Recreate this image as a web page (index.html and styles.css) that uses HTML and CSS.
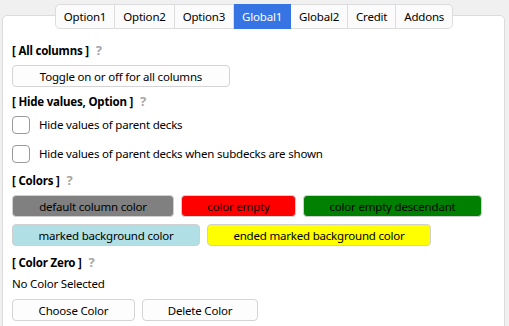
FILE: index.html
```html
<!DOCTYPE html>
<html lang="en">
<head>
    <meta charset="UTF-8">
    <title>Global1</title>
    <link rel="stylesheet" href="styles.css">
</head>
<body>
    <div class="window">
        <div class="tabbar">
            <button class="tab">Option1</button>
            <button class="tab">Option2</button>
            <button class="tab">Option3</button>
            <button class="tab active">Global1</button>
            <button class="tab">Global2</button>
            <button class="tab">Credit</button>
            <button class="tab">Addons</button>
        </div>
        <div class="panel">
            <div class="heading">[ All columns ] <span class="help">?</span></div>
            <button class="btn btn-toggle">Toggle on or off for all columns</button>

            <div class="heading">[ Hide values, Option ] <span class="help">?</span></div>
            <label class="check"><span class="box"></span>Hide values of parent decks</label>
            <label class="check second"><span class="box"></span>Hide values of parent decks when subdecks are shown</label>

            <div class="heading">[ Colors ] <span class="help">?</span></div>
            <div class="color-row">
                <button class="btn swatch gray">default column color</button>
                <button class="btn swatch red">color empty</button>
                <button class="btn swatch green">color empty descendant</button>
            </div>
            <div class="color-row">
                <button class="btn swatch lightblue">marked background color</button>
                <button class="btn swatch yellow">ended marked background color</button>
            </div>

            <div class="heading">[ Color Zero ] <span class="help">?</span></div>
            <div class="status">No Color Selected</div>
            <div class="btn-row">
                <button class="btn btn-choose">Choose Color</button>
                <button class="btn btn-delete">Delete Color</button>
            </div>
        </div>
    </div>
</body>
</html>
```
FILE: styles.css
```css
/* General */
body {
    margin: 0;
    background-color: #f0f0f0;
    font-family: "Noto Sans", "Open Sans", sans-serif;
    font-size: 11.5px;
    letter-spacing: -0.2px;
    color: #000;
}

.window {
    padding: 4px 4px 0 2px;
    height: 322px;
    overflow: hidden;
}

/* Tabs */
.tabbar {
    display: flex;
    justify-content: center;
    position: relative;
    z-index: 1;
    margin-bottom: -14px;
    padding-left: 1px;
}

.tab {
    font: inherit;
    letter-spacing: inherit;
    height: 25px;
    padding: 0 8px;
    background-color: #fbfbfb;
    border: 1px solid #dcdcdc;
    border-left: none;
    color: #000;
}

.tab:first-child {
    border-left: 1px solid #dcdcdc;
    border-radius: 5px 0 0 5px;
}

.tab:last-child {
    border-radius: 0 5px 5px 0;
}

.tab.active {
    background-color: #3574e2;
    border-color: #3574e2;
    color: #fff;
}

/* Panel */
.panel {
    background-color: #fff;
    border: 1px solid #dcdcdc;
    border-radius: 5px;
    padding: 26px 9px 20px 9px;
    height: 320px;
}

.heading {
    font-weight: bold;
    height: 16px;
    line-height: 16px;
    margin-top: 6px;
}

.heading:first-child {
    margin-top: 0;
}

.help {
    color: #a6a6a6;
    font-size: 13px;
    margin-left: 4px;
}

/* Buttons */
.btn {
    font: inherit;
    letter-spacing: inherit;
    display: block;
    height: 22px;
    padding: 0;
    background-color: #fdfdfd;
    border: 1px solid #d4d4d4;
    border-radius: 4px;
    color: #000;
}

.btn-toggle {
    width: 218px;
    margin-top: 7px;
}

/* Checkboxes */
.check {
    display: flex;
    align-items: center;
    height: 18px;
    margin-top: 7px;
    line-height: 18px;
}

.check.second {
    margin-top: 11px;
}

.check.second + .heading {
    margin-top: 9px;
}

.box {
    width: 16px;
    height: 16px;
    border: 1px solid #9a9a9a;
    border-radius: 4px;
    margin-right: 9px;
    background-color: #fff;
}

/* Color swatches */
.color-row {
    display: flex;
    gap: 7px;
    height: 22px;
    margin-top: 7px;
}

.color-row + .color-row {
    margin-top: 7px;
}

.color-row + .heading {
    margin-top: 8px;
}

.swatch { border-color: #d0d0d0; }
.gray { width: 162px; background-color: #808080; }
.red { width: 115px; background-color: #ff0000; }
.green { width: 179px; background-color: #008000; }
.lightblue { width: 188px; background-color: #b0e0e6; }
.yellow { width: 224px; background-color: #ffff00; }

.status {
    height: 16px;
    line-height: 16px;
    margin-top: 6px;
}

.btn-row {
    display: flex;
    gap: 7px;
    height: 22px;
    margin-top: 7px;
}

.btn-choose { width: 123px; }
.btn-delete { width: 116px; }
```
